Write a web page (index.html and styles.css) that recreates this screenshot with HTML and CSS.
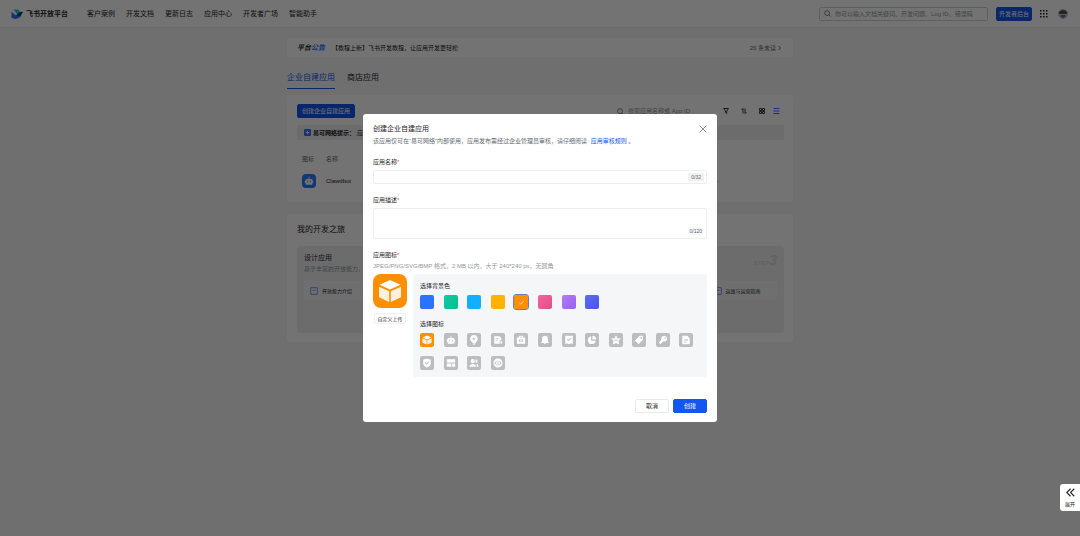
FILE: index.html
```html
<!DOCTYPE html>
<html lang="zh-CN">
<head>
  <meta charset="UTF-8">
  <meta name="viewport" content="width=device-width, initial-scale=1.0">
  <title>飞书开放平台</title>
  <link rel="stylesheet" href="styles.css">
</head>
<body>
  <svg class="sprite" aria-hidden="true">
    <symbol id="iCube" viewBox="0 0 24 24">
      <path d="M12 1 22.500 5.800 12 10.600 1.500 5.800Z"/>
      <path d="M1 7.700 11.200 12.300V23L1 18.300Z" opacity=".88"/>
      <path d="M23 7.700 12.800 12.300V23L23 18.300Z" opacity=".88"/>
    </symbol>
    <symbol id="iRobot" viewBox="0 0 24 24">
      <path fill-rule="evenodd" d="M11 2h2v5h5a2 2 0 0 1 2 2v2h2v6h-2v2a2 2 0 0 1-2 2H6a2 2 0 0 1-2-2v-2H2v-6h2V9a2 2 0 0 1 2-2h5ZM8 11v4h2v-4Zm6 0v4h2v-4Z"/>
    </symbol>
    <symbol id="iBulb" viewBox="0 0 24 24">
      <path fill-rule="evenodd" d="M12 0a9 9 0 0 1 4 17v2H8v-2a9 9 0 0 1 4-17Zm0 5-4 5h3v4l5-6h-4Z"/><path d="M9 20h6v3H9z"/>
    </symbol>
    <symbol id="iDoc" viewBox="0 0 24 24">
      <path fill-rule="evenodd" d="M3 3h13l4 4v6h-4v8H3Zm3 5v2h7V8Zm0 5v2h5v-2Z"/><path d="M18 15h4v6h-4z"/>
    </symbol>
    <symbol id="iCase" viewBox="0 0 24 24">
      <path fill-rule="evenodd" d="M7 2h10v4h5v15H2V6h5Zm2 2v2h6V4ZM7 10v7h2v-7Zm4 0v7h2v-7Zm4 0v7h2v-7Z"/>
    </symbol>
    <symbol id="iBell" viewBox="0 0 24 24">
      <path d="M12 2a7 7 0 0 1 7 7v6l3 4H2l3-4V9a7 7 0 0 1 7-7ZM9 20h6l-3 3Z"/>
    </symbol>
    <symbol id="iCheckDoc" viewBox="0 0 24 24">
      <path fill-rule="evenodd" d="M3 2h18v20l-4-2-5 2-5-2-4 2Zm4 8 4 5 7-7-1.500-1.500L11 12 8.500 8.500Z"/>
    </symbol>
    <symbol id="iPie" viewBox="0 0 24 24">
      <path d="M10 3v11h11A9.500 9.500 0 1 1 10 3Z"/><path d="M13 2a9 9 0 0 1 9 9h-9Z"/>
    </symbol>
    <symbol id="iStar" viewBox="0 0 24 24">
      <path fill-rule="evenodd" d="m12 0 3.500 7.500 8.500 1-6.200 5.800L20 23l-8-4-8 4 2.200-8.700L0 8.500l8.500-1ZM8 12v2h8v-2Z"/>
    </symbol>
    <symbol id="iTag" viewBox="0 0 24 24">
      <path fill-rule="evenodd" d="M13 2h8l1 9-11 11-9-8Zm4 3a2 2 0 1 0 0 4 2 2 0 0 0 0-4Z"/>
    </symbol>
    <symbol id="iWrench" viewBox="0 0 24 24">
      <path fill-rule="evenodd" d="M14 2a7 7 0 0 1 8 8 7 7 0 0 1-9 5l-7 7-4-4 6-7a7 7 0 0 1 6-9Zm2 4v3h3V6Z"/>
    </symbol>
    <symbol id="iPage" viewBox="0 0 24 24">
      <path fill-rule="evenodd" d="M3 2h12l6 6v14H3Zm4 9v2h10v-2Zm0 5v2h6v-2Z"/>
    </symbol>
    <symbol id="iShield" viewBox="0 0 24 24">
      <path fill-rule="evenodd" d="M12 1 21 4v9c0 5-5 8-9 10-4-2-9-5-9-10V4Zm-5 10 4 5 7-7-1.500-1.500L11 13 8.500 9.500Z"/>
    </symbol>
    <symbol id="iLayout" viewBox="0 0 24 24">
      <path d="M2 3h20v8H2zM2 13h11v8H2zM15 13h7v8h-7z"/>
    </symbol>
    <symbol id="iUsers" viewBox="0 0 24 24">
      <circle cx="9" cy="7.500" r="5"/><path d="M1 21c0-9 16-9 16 0Z"/><path d="M16 3a4.500 4.500 0 0 1 0 9ZM18 14c4 1 5 4 5 7h-4Z"/>
    </symbol>
    <symbol id="iCode" viewBox="0 0 24 24">
      <path fill-rule="evenodd" d="M12 1a11 11 0 1 1 0 22 11 11 0 0 1 0-22ZM8 7l-5 5 5 5 1.500-1.500L6 12l3.500-3.500Zm8 0-1.500 1.500L18 12l-3.500 3.500L16 17l5-5ZM11 6v12h2V6Z"/>
    </symbol>
    <symbol id="iSearch" viewBox="0 0 16 16">
      <g fill="none" stroke="currentColor" stroke-width="1.800"><circle cx="7" cy="7" r="5.500"/><path d="m11 11 4 4"/></g>
    </symbol>
  </svg>

  <header class="header">
    <a class="logo" href="#">
      <svg viewBox="0 0 24 20" aria-hidden="true">
        <path fill="#00d6b9" d="M5 1h9c2 2 4 5 4 8l-5 4C11 8 8 4 5 1Z"/>
        <path fill="#133c9a" d="M24 6c-3-1-6-1-8 1l-4 4-3 3 5 4c4-1 6-4 7-7Z"/>
        <path fill="#3370ff" d="M1 5c5 6 11 9 17 9-3 6-11 8-17 3Z"/>
      </svg>
      飞书开放平台
    </a>
    <nav class="nav">
      <a href="#">客户案例</a>
      <a href="#">开发文档</a>
      <a href="#">更新日志</a>
      <a href="#">应用中心</a>
      <a href="#">开发者广场</a>
      <a href="#">智能助手</a>
    </nav>
    <label class="siteSearch">
      <svg aria-hidden="true"><use href="#iSearch"/></svg>
      <input type="search" aria-label="搜索文档" placeholder="你可以输入文档关键词、开发问题、Log ID、错误码">
    </label>
    <button class="btn primary console" type="button">开发者后台</button>
    <button class="iconBtn apps" type="button" aria-label="更多产品">
      <svg viewBox="0 0 16 16" fill="#1f2329"><path d="M0 0h3v3H0zM6 0h3v3H6zM12 0h3v3h-3zM0 6h3v3H0zM6 6h3v3H6zM12 6h3v3h-3zM0 12h3v3H0zM6 12h3v3H6zM12 12h3v3h-3z"/></svg>
    </button>
    <button class="iconBtn avatar" type="button" aria-label="账号">
      <svg viewBox="0 0 20 20"><circle cx="10" cy="10" r="9" fill="#c9cdd4" stroke="#8f959e"/><path fill="#4e5359" d="M1 8c2-8 16-8 18 0l-3 2H4Z"/><path fill="#646a73" d="M5 12h10c0 7-10 7-10 0Z"/></svg>
    </button>
  </header>

  <main class="main">
    <section class="notice">
      <strong class="noticeTitle">平台<em>公告</em></strong>
      <a href="#">【教程上新】飞书开发教程，让应用开发更轻松</a>
      <a class="unread" href="#">26 条未读
        <svg viewBox="0 0 6 12" aria-hidden="true"><path d="m1 2 4 4-4 4"/></svg>
      </a>
    </section>

    <nav class="tabs">
      <a class="tab tabActive" href="#">企业自建应用</a>
      <a class="tab" href="#">商店应用</a>
    </nav>

    <section class="card appCard">
      <div class="toolbar">
        <button class="btn primary" type="button">创建企业自建应用</button>
        <label class="appSearch">
          <svg aria-hidden="true"><use href="#iSearch"/></svg>
          <input type="search" aria-label="搜索应用" placeholder="搜索应用名称或 App ID">
        </label>
        <button class="iconBtn tool" type="button" aria-label="筛选">
          <svg viewBox="0 0 12 12"><path d="M1 1h10L7.500 6v5L5 9V6Z"/></svg>
        </button>
        <button class="iconBtn tool" type="button" aria-label="排序">
          <svg viewBox="0 0 12 12"><path d="M4 11V1L1 4M8 1v10l3-3"/></svg>
        </button>
        <button class="iconBtn tool" type="button" aria-label="卡片视图">
          <svg viewBox="0 0 12 12"><path d="M1 1h4v4H1zM7 1h4v4H7zM1 7h4v4H1zM7 7h4v4H7z"/></svg>
        </button>
        <button class="iconBtn tool toolActive" type="button" aria-label="列表视图">
          <svg viewBox="0 0 12 12"><path d="M0 1h12M0 6h12M0 11h12"/></svg>
        </button>
      </div>
      <p class="tip">
        <svg viewBox="0 0 12 12" aria-hidden="true"><rect width="12" height="12" rx="2" fill="#3370ff"/><path d="M3 6h6M6 3v6" stroke="#fff" stroke-width="1.500"/></svg>
        <strong>易可网络提示：</strong>应用
      </p>
      <table class="appTable">
        <thead>
          <tr><th class="colIcon">图标</th><th>名称</th><th class="colLast"></th></tr>
        </thead>
        <tbody>
          <tr>
            <td><span class="appIcon"><svg aria-hidden="true"><use href="#iRobot"/></svg></span></td>
            <td>Clawdbot</td>
            <td>-</td>
          </tr>
        </tbody>
      </table>
    </section>

    <section class="card">
      <h2 class="journeyTitle">我的开发之旅</h2>
      <div class="steps">
        <div class="step">
          <h3>设计应用</h3>
          <p>基于丰富的开放能力，</p>
          <div class="links">
            <a href="#"><svg viewBox="0 0 12 12" aria-hidden="true"><path d="M1 1h10v10H1zM4 5h4"/></svg>开放能力介绍</a>
          </div>
        </div>
        <div class="step"></div>
        <div class="step stepLast">
          <span class="stepNo"><small>STEP</small>3</span>
          <div class="links">
            <a class="linkSecond" href="#"><svg viewBox="0 0 12 12" aria-hidden="true"><path d="M1 1h10v10H1zM4 5h4"/></svg>运维与运营指南</a>
          </div>
        </div>
      </div>
    </section>
  </main>

  <div class="mask">
    <form class="modal" role="dialog" aria-modal="true" aria-labelledby="modalTitle">
      <div class="modalHead">
        <h1 id="modalTitle">创建企业自建应用</h1>
        <button class="iconBtn close" type="button" aria-label="关闭">
          <svg viewBox="0 0 12 12"><path d="m1 1 10 10M11 1 1 11"/></svg>
        </button>
      </div>
      <p class="desc">该应用仅可在“易可网络”内部使用，应用发布需经过企业管理员审核，请仔细阅读 <a href="#">应用审核规则</a> 。</p>

      <label class="label" for="appName">应用名称<i>*</i></label>
      <div class="field">
        <input id="appName" type="text" maxlength="32">
        <span class="count">0/32</span>
      </div>

      <label class="label" for="appDesc">应用描述<i>*</i></label>
      <div class="field fieldArea">
        <textarea id="appDesc" maxlength="120"></textarea>
        <span class="count">0/120</span>
      </div>

      <div class="label">应用图标<i>*</i></div>
      <p class="hint">JPEG/PNG/SVG/BMP 格式，2 MB 以内，大于 240*240 px，无圆角</p>
      <div class="iconPicker">
        <div class="preview">
          <div class="previewIcon"><svg aria-hidden="true"><use href="#iCube"/></svg></div>
          <button class="btn upload" type="button">自定义上传</button>
        </div>
        <div class="panel">
          <h4>选择背景色</h4>
          <div class="options">
            <label class="swatch blue"><input type="radio" name="color" aria-label="蓝色"></label>
            <label class="swatch green"><input type="radio" name="color" aria-label="绿色"></label>
            <label class="swatch sky"><input type="radio" name="color" aria-label="天蓝"></label>
            <label class="swatch yellow"><input type="radio" name="color" aria-label="黄色"></label>
            <label class="swatch orange"><input type="radio" name="color" aria-label="橙色" checked><svg viewBox="0 0 12 12" aria-hidden="true"><path d="m2 6 3 3 5-6"/></svg></label>
            <label class="swatch pink"><input type="radio" name="color" aria-label="粉色"></label>
            <label class="swatch purple"><input type="radio" name="color" aria-label="紫色"></label>
            <label class="swatch indigo"><input type="radio" name="color" aria-label="靛蓝"></label>
          </div>
          <h4>选择图标</h4>
          <div class="options">
            <label class="glyph"><input type="radio" name="icon" aria-label="立方体" checked><svg><use href="#iCube"/></svg></label>
            <label class="glyph"><input type="radio" name="icon" aria-label="机器人"><svg><use href="#iRobot"/></svg></label>
            <label class="glyph"><input type="radio" name="icon" aria-label="灵感"><svg><use href="#iBulb"/></svg></label>
            <label class="glyph"><input type="radio" name="icon" aria-label="文件"><svg><use href="#iDoc"/></svg></label>
            <label class="glyph"><input type="radio" name="icon" aria-label="工具箱"><svg><use href="#iCase"/></svg></label>
            <label class="glyph"><input type="radio" name="icon" aria-label="通知"><svg><use href="#iBell"/></svg></label>
            <label class="glyph"><input type="radio" name="icon" aria-label="审批"><svg><use href="#iCheckDoc"/></svg></label>
            <label class="glyph"><input type="radio" name="icon" aria-label="图表"><svg><use href="#iPie"/></svg></label>
            <label class="glyph"><input type="radio" name="icon" aria-label="星标"><svg><use href="#iStar"/></svg></label>
            <label class="glyph"><input type="radio" name="icon" aria-label="标签"><svg><use href="#iTag"/></svg></label>
            <label class="glyph"><input type="radio" name="icon" aria-label="扳手"><svg><use href="#iWrench"/></svg></label>
            <label class="glyph"><input type="radio" name="icon" aria-label="文档"><svg><use href="#iPage"/></svg></label>
            <label class="glyph"><input type="radio" name="icon" aria-label="安全"><svg><use href="#iShield"/></svg></label>
            <label class="glyph"><input type="radio" name="icon" aria-label="布局"><svg><use href="#iLayout"/></svg></label>
            <label class="glyph"><input type="radio" name="icon" aria-label="成员"><svg><use href="#iUsers"/></svg></label>
            <label class="glyph"><input type="radio" name="icon" aria-label="代码"><svg><use href="#iCode"/></svg></label>
          </div>
        </div>
      </div>

      <div class="modalFoot">
        <button class="btn" type="button">取消</button>
        <button class="btn primary" type="button">创建</button>
      </div>
    </form>
  </div>

  <button class="expand" type="button">
    <svg viewBox="0 0 12 12" aria-hidden="true"><path d="M6 1 1 6l5 5M11 1 6 6l5 5"/></svg>
    展开
  </button>
</body>
</html>
```
FILE: styles.css
```css
* {
  box-sizing: border-box;
}
body {
  margin: 0;
  min-height: 100vh;
  background: #f5f6f7;
  color: #1f2329;
  font-family: "Liberation Sans", "Noto Sans CJK SC", sans-serif;
  font-size: 6px;
  line-height: 8px;
}
h1, h2, h3, h4, p {
  margin: 0;
  font-weight: 400;
}
a {
  color: inherit;
  text-decoration: none;
}
button, input, textarea {
  font: inherit;
  color: inherit;
}
svg {
  display: block;
  flex: none;
}
.sprite {
  position: absolute;
  width: 0;
  height: 0;
}

/* 按钮 */
.btn {
  height: 14px;
  padding: 0 4px;
  border: 1px solid #e8eaec;
  border-radius: 2px;
  background: #fff;
  white-space: nowrap;
  cursor: pointer;
}
.primary {
  border-color: #1456f0;
  background: #1456f0;
  color: #fff;
}
.iconBtn {
  display: flex;
  padding: 0;
  border: 0;
  background: none;
  cursor: pointer;
}

/* 顶部导航 */
.header {
  display: flex;
  align-items: center;
  height: 28px;
  padding: 0 12px 0 11px;
  background: #fff;
  border-bottom: 1px solid #eff0f1;
  font-size: 7px;
}
.logo {
  display: flex;
  align-items: center;
  gap: 3px;
  width: 76px;
  font-weight: 700;
}
.logo svg {
  width: 12px;
  height: 10px;
}
.nav {
  display: flex;
  gap: 11px;
  flex: 1;
}
.siteSearch, .appSearch {
  display: flex;
  align-items: center;
  gap: 4px;
  height: 14px;
  padding: 0 4px;
  color: #646a73;
  font-size: 6px;
}
.siteSearch {
  width: 169px;
  border: 1px solid #d0d3d6;
  border-radius: 2px;
}
.siteSearch svg, .appSearch svg {
  width: 7px;
  height: 7px;
}
.siteSearch input, .appSearch input {
  flex: 1;
  min-width: 0;
  padding: 0;
  border: 0;
  outline: none;
  background: none;
}
::placeholder {
  color: #8f959e;
  opacity: 1;
}
.console {
  width: 36px;
  margin: 0 8px;
  padding: 0 2px;
  font-size: 6px;
}
.apps svg {
  width: 8px;
  height: 8px;
}
.avatar {
  margin-left: 10px;
}
.avatar svg {
  width: 10px;
  height: 10px;
}

/* 主体 */
.main {
  max-width: 506px;
  margin: 0 auto;
  padding-top: 10px;
}
.notice {
  display: flex;
  align-items: center;
  gap: 7px;
  height: 19px;
  padding: 0 12px 0 10px;
  border-radius: 2px;
  background: #fff;
}
.noticeTitle {
  font-size: 7px;
  font-style: italic;
}
.noticeTitle em {
  color: #3370ff;
}
.unread {
  display: flex;
  align-items: center;
  gap: 2px;
  margin-left: auto;
  color: #646a73;
}
.unread svg {
  width: 3px;
  height: 6px;
  fill: none;
  stroke: #646a73;
  stroke-width: 2;
}
.tabs {
  display: flex;
  gap: 12px;
  margin: 14px 0 6px;
}
.tab {
  padding-bottom: 3px;
  border-bottom: 1px solid transparent;
  font-size: 8px;
  line-height: 14px;
}
.tabActive {
  border-color: #1456f0;
  color: #1456f0;
}
.card {
  margin-bottom: 12px;
  padding: 9px 9px 9px 10px;
  border-radius: 3px;
  background: #fff;
}
.appCard {
  padding-bottom: 10px;
}
.toolbar {
  display: flex;
  align-items: center;
  gap: 12px;
  padding-right: 4px;
}
.appSearch {
  width: 98px;
  margin-left: auto;
}
.tool svg {
  width: 6px;
  height: 6px;
  fill: none;
  stroke: #373c43;
  stroke-width: 2;
}
.toolActive svg {
  width: 7px;
  stroke: #3370ff;
}
.toolActive {
  margin-left: -4px;
}
.tip {
  display: flex;
  align-items: center;
  gap: 2px;
  height: 15px;
  margin-top: 7px;
  padding: 0 7px;
  border-radius: 2px;
  background: #eff0f1;
}
.tip svg {
  width: 7px;
  height: 7px;
}
.appTable {
  width: 100%;
  margin-top: 8px;
  border-collapse: collapse;
}
.appTable th, .appTable td {
  height: 22px;
  padding: 0 0 0 5px;
  text-align: left;
  font-weight: 400;
}
.appTable th {
  color: #646a73;
}
.colIcon {
  width: 24px;
}
.colLast {
  width: 73px;
}
.appIcon {
  display: flex;
  align-items: center;
  justify-content: center;
  width: 14px;
  height: 14px;
  border-radius: 4px;
  background: #2b7bff;
  fill: #fff;
}
.appIcon svg {
  width: 10px;
  height: 10px;
}

.journeyTitle {
  margin: 0 0 9px;
  font-size: 8px;
  line-height: 14px;
}
.steps {
  display: grid;
  grid-template-columns: repeat(3, 1fr);
  gap: 8px;
}
.step {
  position: relative;
  min-height: 87px;
  padding: 7px;
  border-radius: 3px;
  background: #eff0f1;
}
.step h3 {
  font-size: 7px;
  line-height: 10px;
}
.step p {
  margin-top: 2px;
  color: #8f959e;
}
.stepLast {
  padding-top: 27px;
}
.stepNo {
  position: absolute;
  top: 7px;
  right: 7px;
  color: #d8dadd;
  font-size: 14px;
  font-style: italic;
  font-weight: 700;
  line-height: 14px;
}
.stepNo small {
  font-size: 6px;
}
.links {
  display: grid;
  grid-template-columns: 1fr 1fr;
  gap: 4px;
  margin-top: 8px;
}
.links a {
  display: flex;
  align-items: center;
  gap: 4px;
  height: 19px;
  padding: 0 6px;
  border-radius: 2px;
  background: #f5f6f7;
  font-size: 5px;
  white-space: nowrap;
}
.linkSecond {
  grid-column: 2;
}
.links svg {
  width: 8px;
  height: 8px;
  fill: none;
  stroke: #3370ff;
  stroke-width: 1;
}

/* 弹窗 */
.mask {
  position: fixed;
  inset: 0;
  display: flex;
  align-items: center;
  justify-content: center;
  background: rgba(0, 0, 0, 0.55);
}
.modal {
  width: 354px;
  padding: 10px 10px 9px;
  border-radius: 3px;
  background: #fff;
}
.modalHead {
  display: flex;
  justify-content: space-between;
  align-items: center;
}
.modalHead h1 {
  font-size: 7px;
  line-height: 10px;
}
.close svg {
  width: 8px;
  height: 8px;
  fill: none;
  stroke: #51565d;
}
.desc {
  margin-top: 3px;
  color: #646a73;
  line-height: 9px;
}
.desc a {
  margin-left: 2px;
  color: #1456f0;
}
.label {
  display: block;
  margin-top: 12px;
}
.label i {
  color: #f54a45;
  font-style: normal;
}
.field {
  display: flex;
  align-items: center;
  height: 14px;
  margin-top: 4px;
  padding: 0 2px 0 4px;
  border: 1px solid #eceef0;
  border-radius: 2px;
}
.field input, .field textarea {
  flex: 1;
  min-width: 0;
  height: 100%;
  padding: 0;
  border: 0;
  outline: none;
  background: none;
  resize: none;
}
.fieldArea {
  align-items: flex-end;
  height: 31px;
  padding: 3px;
}
.count {
  padding: 0 3px;
  border-radius: 1px;
  background: #eff0f1;
  color: #646a73;
  font-size: 5px;
}
.fieldArea .count {
  padding: 0 1px;
  background: #f5f6f7;
}
.hint {
  margin-top: 3px;
  color: #8f959e;
}
.iconPicker {
  display: flex;
  gap: 6px;
  margin-top: 4px;
}
.preview {
  display: flex;
  flex-direction: column;
  align-items: center;
  gap: 5px;
}
.previewIcon {
  display: flex;
  align-items: center;
  justify-content: center;
  width: 34px;
  height: 34px;
  border-radius: 8px;
  background: #ff8f00;
  fill: #fff;
}
.previewIcon svg {
  width: 24px;
  height: 24px;
}
.upload {
  height: 11px;
  padding: 0 2px;
  border-color: #eff0f1;
  font-size: 5px;
}
.panel {
  flex: 1;
  padding: 8px 4px 7px 7px;
  border-radius: 2px;
  background: #f5f6f7;
}
.options {
  display: grid;
  grid-template-columns: repeat(12, 1fr);
  row-gap: 9px;
  margin-top: 5px;
}
.options + h4 {
  margin-top: 11px;
}
.options input {
  position: absolute;
  width: 14px;
  height: 14px;
  margin: 0;
  opacity: 0;
}
.swatch, .glyph {
  display: flex;
  align-items: center;
  justify-content: center;
  width: 14px;
  height: 14px;
  border-radius: 2px;
  cursor: pointer;
}
.blue { background: #2b73ff; }
.green { background: linear-gradient(135deg, #12c9a0, #07bd91); }
.sky { background: #10b0ff; }
.yellow { background: #ffb300; }
.orange { background: #ff8f00; }
.pink { background: linear-gradient(135deg, #f0659c, #e54d88); }
.purple { background: linear-gradient(135deg, #b07cf8, #9a60ee); }
.indigo { background: linear-gradient(135deg, #5c6cf5, #4a55e2); }
.swatch:has(:checked) {
  outline: 1px solid #6b7bc0;
}
.swatch svg {
  width: 7px;
  height: 7px;
  fill: none;
  stroke: #fff;
}
.glyph {
  background: #bbbdc0;
  fill: #fff;
}
.glyph:has(:checked) {
  background: #ff8f00;
}
.glyph svg {
  width: 10px;
  height: 10px;
}
.modalFoot {
  display: flex;
  justify-content: flex-end;
  gap: 4px;
  margin-top: 22px;
}
.modalFoot .btn {
  min-width: 34px;
}

/* 侧边展开 */
.expand {
  position: fixed;
  right: 0;
  bottom: 25px;
  display: flex;
  flex-direction: column;
  align-items: center;
  justify-content: center;
  gap: 3px;
  width: 20px;
  height: 27px;
  padding: 0;
  border: 0;
  border-radius: 3px 0 0 3px;
  background: #fff;
  font-size: 5px;
  cursor: pointer;
}
.expand svg {
  width: 9px;
  height: 9px;
  fill: none;
  stroke: #1f2329;
  stroke-width: 1.5;
}
```
